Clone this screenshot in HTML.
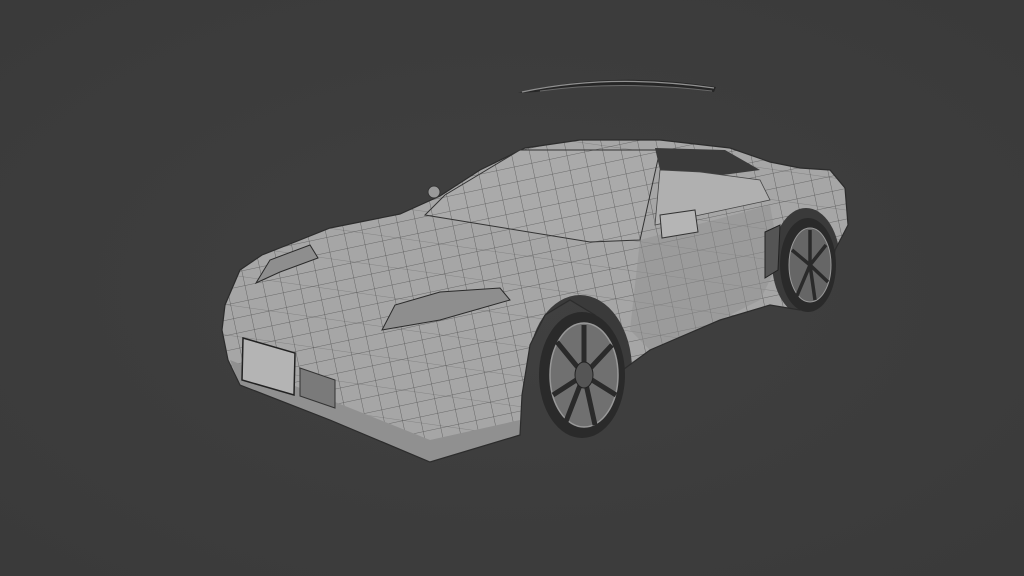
<!DOCTYPE html>
<html><head><meta charset="utf-8"><style>
html,body{margin:0;padding:0;background:#3d3d3d;}
svg{display:block}
</style></head><body>
<svg width="1024" height="576" viewBox="0 0 1024 576" xmlns="http://www.w3.org/2000/svg">
<defs>
<radialGradient id="bg" cx="50%" cy="50%" r="70%">
<stop offset="0" stop-color="#404040"/><stop offset="1" stop-color="#3a3a3a"/>
</radialGradient>
<pattern id="grid" width="18" height="15" patternUnits="userSpaceOnUse" patternTransform="rotate(-12)">
<path d="M0 0H18M0 0V15" stroke="#333" stroke-width="0.8" fill="none" opacity="0.7"/>
</pattern>
<pattern id="grid2" width="7" height="30" patternUnits="userSpaceOnUse" patternTransform="rotate(8)">
<path d="M0 0H7" stroke="#333" stroke-width="0.6" fill="none" opacity="0.5"/>
</pattern>
<clipPath id="body">
<path id="bp" d="M225 305 L240 270 L262 255 L300 240 L330 228 L400 214 L440 196 L480 170 L525 148 L580 140 L660 140 L730 148 L770 162 L800 168 L830 170 L845 188 L848 225 L835 250 L830 285 L800 310 L770 305 L720 320 L650 350 L620 372 L612 345 L595 315 L570 300 L545 315 L530 345 L522 395 L520 435 L430 462 L330 420 L240 385 L228 360 L222 330 Z"/>
</clipPath>
</defs>
<rect width="1024" height="576" fill="url(#bg)"/>
<!-- spoiler -->
<path d="M518 93 Q610 70 716 87 L714 92 Q620 78 536 92 Z" fill="#262626"/>
<path d="M522 92 Q610 73 714 88" stroke="#909090" stroke-width="1.2" fill="none"/>
<path d="M540 91 Q620 80 712 91" stroke="#6a6a6a" stroke-width="1" fill="none"/>
<!-- body -->
<use href="#bp" fill="#a6a6a6"/>
<g clip-path="url(#body)">
<rect width="1024" height="576" fill="url(#grid)"/>
<rect width="1024" height="576" fill="url(#grid2)"/>
<path d="M640 240 L770 205 L780 260 L760 300 L720 320 L650 350 L630 330 Z" fill="#8f8f8f" opacity="0.5"/>
<path d="M230 360 L330 400 L430 440 L520 420 L520 440 L430 462 L240 385 Z" fill="#909090"/>
<!-- arch shadows -->
<ellipse cx="580" cy="370" rx="52" ry="75" fill="#3a3a3a"/>
<ellipse cx="806" cy="262" rx="34" ry="54" fill="#3a3a3a"/>
</g>
<use href="#bp" fill="none" stroke="#2c2c2c" stroke-width="1.2"/>
<!-- windshield -->
<path d="M425 215 L445 195 L520 150 L660 150 L640 240 L590 242 Z" fill="#aaaaaa" stroke="#333" stroke-width="1"/>
<path d="M425 215 L445 195 L520 150 L660 150 L640 240 L590 242 Z" fill="url(#grid)"/>
<!-- cockpit -->
<path d="M655 148 L725 150 L760 170 L700 178 L660 170 Z" fill="#3a3a3a"/>
<path d="M660 170 L700 172 L760 180 L770 200 L700 215 L655 225 Z" fill="#b0b0b0" stroke="#444" stroke-width="0.8"/>
<path d="M660 215 L695 210 L698 232 L662 238 Z" fill="#b5b5b5" stroke="#333"/>
<circle cx="434" cy="192" r="6" fill="#999" stroke="#333"/>
<path d="M765 232 L780 225 L778 270 L765 278 Z" fill="#555" stroke="#222"/>
<!-- headlights -->
<path d="M382 330 L395 305 L440 292 L500 288 L510 300 L440 320 Z" fill="#8e8e8e" stroke="#2a2a2a"/>
<path d="M256 283 L270 260 L310 245 L318 258 L280 272 Z" fill="#8e8e8e" stroke="#2a2a2a"/>
<!-- license plate -->
<path d="M243 338 L295 353 L294 395 L242 380 Z" fill="#b4b4b4" stroke="#222" stroke-width="1.5"/>
<path d="M300 368 L335 380 L335 408 L300 396 Z" fill="#7a7a7a" stroke="#333"/>
<!-- front wheel -->
<ellipse cx="582" cy="375" rx="43" ry="63" fill="#2a2a2a"/>
<ellipse cx="584" cy="375" rx="34" ry="52" fill="#707070" stroke="#999" stroke-width="1.5"/>
<g stroke="#2a2a2a" stroke-width="5" fill="none">
<path d="M584 375 L584 325 M584 375 L612 345 M584 375 L616 395 M584 375 L595 425 M584 375 L565 424 M584 375 L553 395 M584 375 L557 342"/>
</g>
<ellipse cx="584" cy="375" rx="9" ry="13" fill="#555" stroke="#222"/>
<!-- rear wheel -->
<ellipse cx="808" cy="265" rx="28" ry="47" fill="#2a2a2a"/>
<ellipse cx="810" cy="265" rx="21" ry="37" fill="#666" stroke="#999"/>
<g stroke="#2a2a2a" stroke-width="3.5"><path d="M810 265 L810 230 M810 265 L826 245 M810 265 L828 282 M810 265 L815 300 M810 265 L796 298 M810 265 L792 250"/></g>
</svg>
</body></html>
